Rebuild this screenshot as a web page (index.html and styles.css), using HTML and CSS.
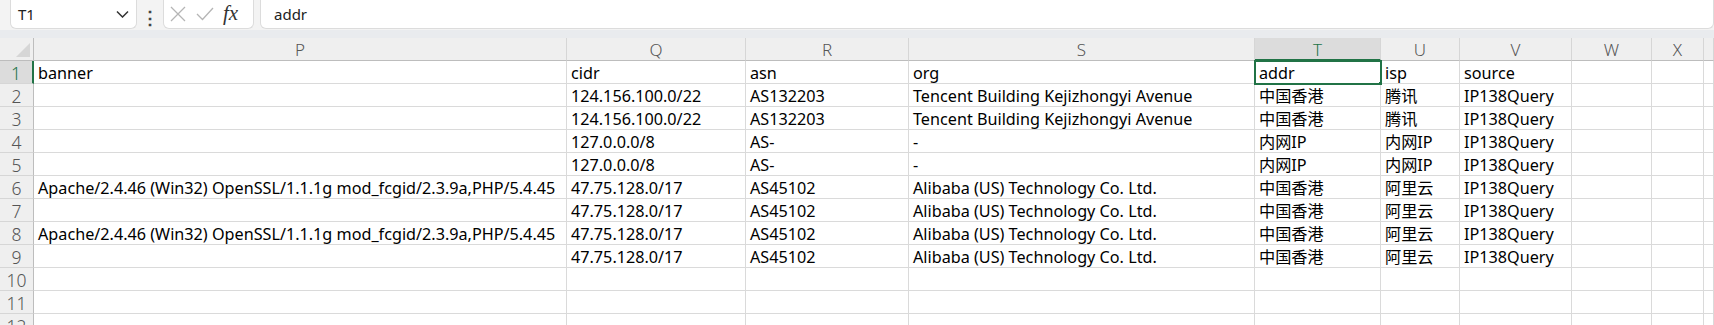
FILE: index.html
```html
<!DOCTYPE html>
<html lang="zh-CN">
<head>
  <meta charset="UTF-8" />
  <title>Sheet</title>
  <link rel="stylesheet" href="styles.css">
</head>
<body>

<div class="toolbar">
  <div class="namebox">
    <span>T1</span>
    <svg class="chev" width="13" height="8" viewBox="0 0 13 8"><path d="M1 1.5 L6.5 7 L12 1.5" fill="none" stroke="#333" stroke-width="1.5"/></svg>
  </div>
  <div class="dots">⋮</div>
  <div class="fxbox">
    <svg width="18" height="18" viewBox="0 0 18 18"><path d="M2 2 L16 16 M16 2 L2 16" stroke="#b5b5b5" stroke-width="1.3"/></svg>
    <svg width="20" height="18" viewBox="0 0 20 18"><path d="M2 9 L7.5 14.5 L18 3" fill="none" stroke="#b5b5b5" stroke-width="1.3"/></svg>
    <span class="fx">fx</span>
  </div>
  <div class="formula">addr</div>
</div>
<div class="strip"></div>

<div class="grid">
  <div class="corner"><div class="tri"></div></div>
  <div class="ch">P</div><div class="ch">Q</div><div class="ch">R</div><div class="ch">S</div>
  <div class="ch sel">T</div><div class="ch">U</div><div class="ch">V</div><div class="ch">W</div><div class="ch">X</div><div class="ch"></div>

  <div class="rh sel">1</div>
  <div class="c">banner</div><div class="c">cidr</div><div class="c">asn</div><div class="c">org</div>
  <div class="c active">addr<span class="handle"></span></div><div class="c">isp</div><div class="c">source</div><div class="c"></div><div class="c"></div><div class="c"></div>

  <div class="rh">2</div>
  <div class="c"></div><div class="c">124.156.100.0/22</div><div class="c">AS132203</div><div class="c">Tencent Building Kejizhongyi Avenue</div>
  <div class="c">中国香港</div><div class="c">腾讯</div><div class="c">IP138Query</div><div class="c"></div><div class="c"></div><div class="c"></div>

  <div class="rh">3</div>
  <div class="c"></div><div class="c">124.156.100.0/22</div><div class="c">AS132203</div><div class="c">Tencent Building Kejizhongyi Avenue</div>
  <div class="c">中国香港</div><div class="c">腾讯</div><div class="c">IP138Query</div><div class="c"></div><div class="c"></div><div class="c"></div>

  <div class="rh">4</div>
  <div class="c"></div><div class="c">127.0.0.0/8</div><div class="c">AS-</div><div class="c">-</div>
  <div class="c">内网IP</div><div class="c">内网IP</div><div class="c">IP138Query</div><div class="c"></div><div class="c"></div><div class="c"></div>

  <div class="rh">5</div>
  <div class="c"></div><div class="c">127.0.0.0/8</div><div class="c">AS-</div><div class="c">-</div>
  <div class="c">内网IP</div><div class="c">内网IP</div><div class="c">IP138Query</div><div class="c"></div><div class="c"></div><div class="c"></div>

  <div class="rh">6</div>
  <div class="c">Apache/2.4.46 (Win32) OpenSSL/1.1.1g mod_fcgid/2.3.9a,PHP/5.4.45</div><div class="c">47.75.128.0/17</div><div class="c">AS45102</div><div class="c">Alibaba (US) Technology Co. Ltd.</div>
  <div class="c">中国香港</div><div class="c">阿里云</div><div class="c">IP138Query</div><div class="c"></div><div class="c"></div><div class="c"></div>

  <div class="rh">7</div>
  <div class="c"></div><div class="c">47.75.128.0/17</div><div class="c">AS45102</div><div class="c">Alibaba (US) Technology Co. Ltd.</div>
  <div class="c">中国香港</div><div class="c">阿里云</div><div class="c">IP138Query</div><div class="c"></div><div class="c"></div><div class="c"></div>

  <div class="rh">8</div>
  <div class="c">Apache/2.4.46 (Win32) OpenSSL/1.1.1g mod_fcgid/2.3.9a,PHP/5.4.45</div><div class="c">47.75.128.0/17</div><div class="c">AS45102</div><div class="c">Alibaba (US) Technology Co. Ltd.</div>
  <div class="c">中国香港</div><div class="c">阿里云</div><div class="c">IP138Query</div><div class="c"></div><div class="c"></div><div class="c"></div>

  <div class="rh">9</div>
  <div class="c"></div><div class="c">47.75.128.0/17</div><div class="c">AS45102</div><div class="c">Alibaba (US) Technology Co. Ltd.</div>
  <div class="c">中国香港</div><div class="c">阿里云</div><div class="c">IP138Query</div><div class="c"></div><div class="c"></div><div class="c"></div>

  <div class="rh">10</div>
  <div class="c"></div><div class="c"></div><div class="c"></div><div class="c"></div><div class="c"></div><div class="c"></div><div class="c"></div><div class="c"></div><div class="c"></div><div class="c"></div>

  <div class="rh">11</div>
  <div class="c"></div><div class="c"></div><div class="c"></div><div class="c"></div><div class="c"></div><div class="c"></div><div class="c"></div><div class="c"></div><div class="c"></div><div class="c"></div>

  <div class="rh">12</div>
  <div class="c"></div><div class="c"></div><div class="c"></div><div class="c"></div><div class="c"></div><div class="c"></div><div class="c"></div><div class="c"></div><div class="c"></div><div class="c"></div>
</div>

</body>
</html>
```

FILE: styles.css
```css
* { box-sizing: border-box; }

body {
  margin: 0; background: #fff; color: #000;
  font-family: "Noto Sans", "Noto Sans CJK SC", sans-serif;
  overflow: hidden;
}

.toolbar {
  height: 30px; background: #f3f3f3;
  display: flex; align-items: flex-end;
  padding: 0 0 1px 10px;
}

.namebox, .fxbox, .formula {
  background: #fff; height: 30px;
  border: 1px solid #dcdcdc; border-top: none;
  border-radius: 0 0 6px 6px;
}

.namebox {
  width: 127px; display: flex; align-items: center;
  justify-content: space-between; padding: 0 7px 0 7px;
  font-size: 15px; color: #222;
}

.dots {
  width: 26px; text-align: center; font-size: 18px; font-weight: bold; color: #444;
}

.fxbox {
  width: 91px; display: flex; align-items: center; gap: 8px;
  padding-left: 5px;
}
.fx { font-family: "Liberation Serif", serif; font-style: italic; font-size: 21px; color: #333; }

.formula {
  flex: 1; margin-left: 6px; padding: 5px 0 0 13px;
  font-size: 15px; color: #222;
}

.strip { height: 8px; background: #e9ebee; }

.grid {
  display: grid;
  grid-template-columns: 34px 533px 179px 163px 346px 126px 79px 112px 80px 52px 1fr;
  grid-auto-rows: 23px;
}

.corner, .ch, .rh { background: #efefef; color: #555; font-weight: 300; }
.corner { border-right: 1px solid #bdbdbd; border-bottom: 1px solid #bdbdbd; display: flex; align-items: flex-end; justify-content: flex-end; padding: 0 3px 3px 0; }
.tri { width: 0; height: 0; border-left: 14px solid transparent; border-bottom: 14px solid #d6d6d6; }

.ch {
  border-right: 1px solid #d6d6d6; border-bottom: 1px solid #bdbdbd;
  text-align: center; font-size: 17px; line-height: 23px;
}
.rh {
  border-right: 1px solid #bdbdbd; border-bottom: 1px solid #d6d6d6;
  text-align: center; font-size: 17.5px; line-height: 24px;
}
.ch.sel, .rh.sel { background: #dcdcdc; color: #217346; }
.ch.sel { border-bottom: 2px solid #217346; }
.rh.sel { border-right: 2px solid #217346; }

.c {
  border-right: 1px solid #dadada; border-bottom: 1px solid #dadada;
  font-size: 16.2px; line-height: 20px; padding: 2px 0 0 4px;
  white-space: nowrap; overflow: hidden;
}

.active { position: relative; outline: 2px solid #217346; outline-offset: -1px; }
.handle {
  position: absolute; right: -4px; bottom: -4px;
  width: 6px; height: 6px; background: #217346; border: 1px solid #fff;
}
```
